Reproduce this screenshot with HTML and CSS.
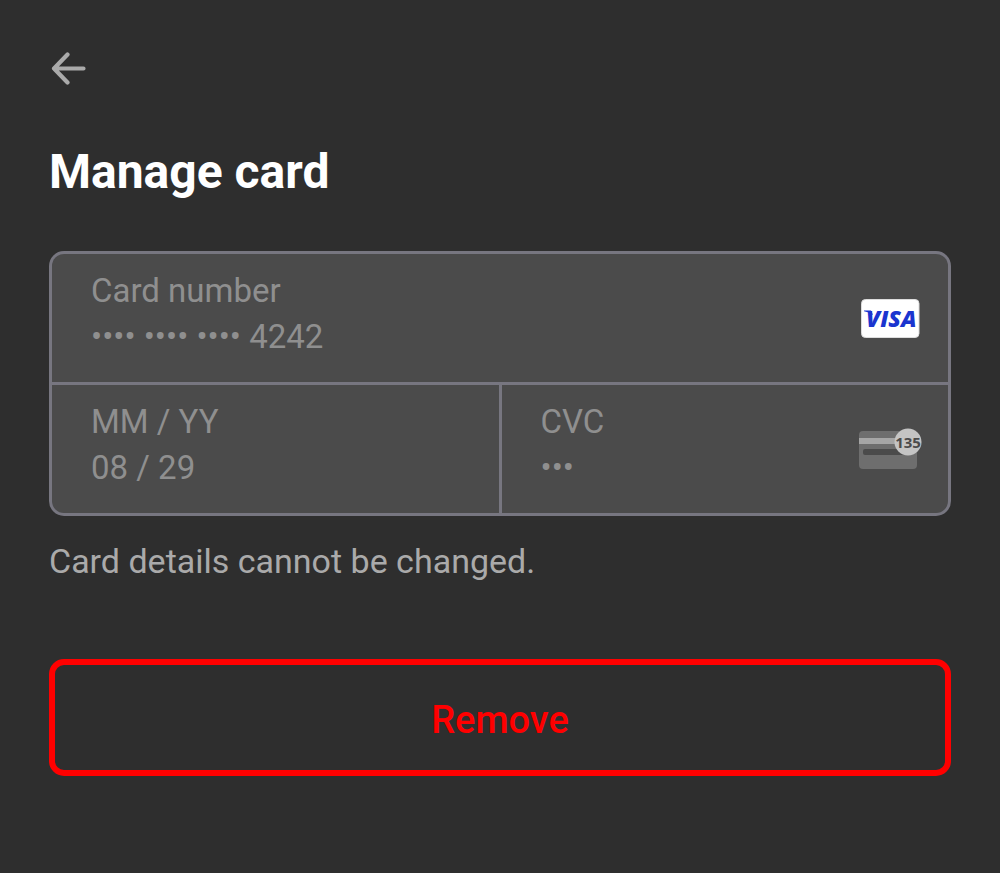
FILE: index.html
```html
<!DOCTYPE html>
<html lang="en">
<head>
<meta charset="utf-8">
<meta name="viewport" content="width=device-width, initial-scale=1">
<title>Manage card</title>
<link rel="stylesheet" href="styles.css">
</head>
<body>
<main class="page">
  <button class="back" type="button" aria-label="Back">
    <svg width="36" height="34" viewBox="0 0 36 34" fill="none" stroke="currentColor" stroke-width="4.200" stroke-linecap="round" stroke-linejoin="round"><path d="M16.500 3.500 3 17.500l13.500 14M3 17.500h29.500"/></svg>
  </button>
  <h1 class="title">Manage card</h1>
  <form class="form">
    <div class="card">
      <div class="field field-number">
        <div class="field-text">
          <label class="label" for="number">Card number</label>
          <input class="value" id="number" type="text" value="•••• •••• •••• 4242" readonly>
        </div>
        <svg class="brand" width="60" height="40" viewBox="0 0 60 40" role="img" aria-label="Visa">
          <rect x="1.5" y="1.5" width="57.5" height="38" rx="4" fill="#fff" stroke="#ddd"/>
          <text class="brand-name" x="6" y="29">VISA</text>
          <path d="M4 12.500h7l2 4.500Q9 14 4 13.200z" fill="#1a35cf"/>
        </svg>
      </div>
      <div class="field">
        <div class="field-text">
          <label class="label" for="expiry">MM / YY</label>
          <input class="value" id="expiry" type="text" value="08 / 29" readonly>
        </div>
      </div>
      <div class="field field-cvc">
        <div class="field-text">
          <label class="label" for="cvc">CVC</label>
          <input class="value" id="cvc" type="text" value="•••" readonly>
        </div>
        <svg class="cvc-icon" width="64" height="44" viewBox="0 0 64 44" aria-hidden="true">
          <rect x="1" y="4" width="58" height="38" rx="4" fill="#6e6e6e"/>
          <path fill="#a6a6a6" d="M1 11h58v6H1z"/>
          <rect x="5" y="22" width="50" height="6" rx="2" fill="#4b4b4b"/>
          <circle cx="50" cy="15" r="13.500" fill="#c4c4c4"/>
          <text class="cvc-digits" x="50" y="20.500" text-anchor="middle">135</text>
        </svg>
      </div>
    </div>
    <p class="note">Card details cannot be changed.</p>
    <button class="remove" type="button">Remove</button>
  </form>
</main>
</body>
</html>
```
FILE: styles.css
```css
* {
  box-sizing: border-box;
}

body {
  margin: 0;
  min-height: 100vh;
  background: #2e2e2e;
  color: #fff;
  font-family: Roboto, "Liberation Sans", sans-serif;
}

.page {
  padding: 51px 49px;
}

.back {
  display: block;
  padding: 0 0 0 2px;
  border: 0;
  background: none;
  color: #aaa;
}

.back svg {
  display: block;
}

.title {
  margin: 57px 0 49px;
  font-size: 48px;
  line-height: 60px;
  font-weight: 700;
}

.card {
  display: grid;
  grid-template-columns: 1fr 1fr;
  gap: 3px;
  overflow: hidden;
  border: 3px solid #777680;
  border-radius: 15px;
  background: #777680;
}

.field {
  display: flex;
  align-items: center;
  min-width: 0;
  padding: 14px 28px 22px 39px;
  background: #4b4b4b;
}

.field-number {
  grid-column: 1 / -1;
}

.field-text {
  display: flex;
  flex: 1;
  flex-direction: column;
  min-width: 0;
}

.label,
.value {
  height: 46px;
  color: #8f8f8f;
  font-size: 33px;
  line-height: 46px;
}

.value {
  width: 100%;
  padding: 0;
  border: 0;
  outline: 0;
  background: none;
  font-family: inherit;
}

.brand,
.cvc-icon {
  flex: none;
  margin-top: 8px;
}

.field-cvc {
  padding-right: 26px;
}

.brand-name {
  fill: #1a35cf;
  font: italic 800 23px "Open Sans", sans-serif;
}

.cvc-digits {
  fill: #4b4b4b;
  font: 700 15px "Noto Sans", sans-serif;
}

.note {
  margin: 21px 0 74px;
  color: #aaa;
  font-size: 34px;
  line-height: 48px;
}

.remove {
  display: block;
  width: 100%;
  padding: 33px 30px 27px;
  border: 6px solid #f00;
  border-radius: 15px;
  background: none;
  color: #f00;
  font-family: inherit;
  font-size: 38px;
  font-weight: 500;
  line-height: 45px;
}
```
